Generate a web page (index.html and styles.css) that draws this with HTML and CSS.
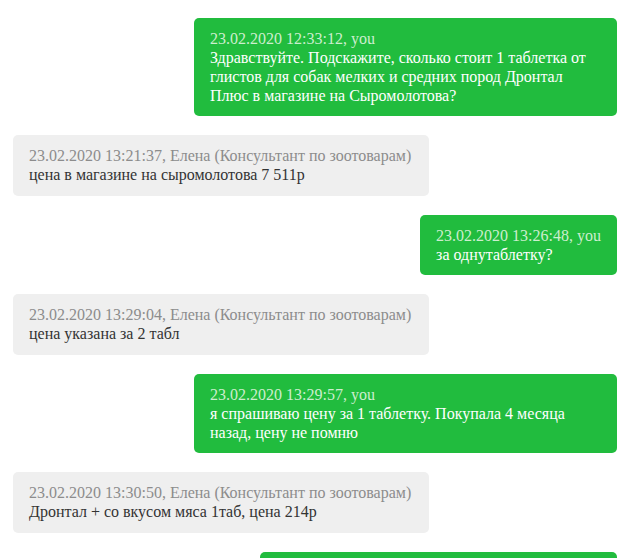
FILE: index.html
```html
<!DOCTYPE html>
<html lang="ru">
<head>
<meta charset="utf-8">
<link rel="stylesheet" href="styles.css">
</head>
<body>
<div class="chat">
  <div class="msg out">
    <div class="time">23.02.2020 12:33:12, you</div>
    <div class="text">Здравствуйте. Подскажите, сколько стоит 1 таблетка от глистов для собак мелких и средних пород Дронтал Плюс в магазине на Сыромолотова?</div>
  </div>
  <div class="msg in">
    <div class="time">23.02.2020 13:21:37, Елена (Консультант по зоотоварам)</div>
    <div class="text">цена в магазине на сыромолотова 7 511р</div>
  </div>
  <div class="msg out">
    <div class="time">23.02.2020 13:26:48, you</div>
    <div class="text">за однутаблетку?</div>
  </div>
  <div class="msg in">
    <div class="time">23.02.2020 13:29:04, Елена (Консультант по зоотоварам)</div>
    <div class="text">цена указана за 2 табл</div>
  </div>
  <div class="msg out">
    <div class="time">23.02.2020 13:29:57, you</div>
    <div class="text">я спрашиваю цену за 1 таблетку. Покупала 4 месяца назад, цену не помню</div>
  </div>
  <div class="msg in">
    <div class="time">23.02.2020 13:30:50, Елена (Консультант по зоотоварам)</div>
    <div class="text">Дронтал + со вкусом мяса 1таб, цена 214р</div>
  </div>
  <div class="msg out partial"></div>
</div>
</body>
</html>
```
FILE: styles.css
```css
html, body {
  margin: 0;
  padding: 0;
  background: #ffffff;
}
body {
  font-family: "Liberation Serif", "Times New Roman", "DejaVu Serif", serif;
  font-size: 16px;
  line-height: 19px;
  overflow: hidden;
  height: 558px;
}
.chat {
  display: flex;
  flex-direction: column;
  gap: 19px;
  padding: 18px 23px 0 13px;
}
.msg {
  max-width: 391px;
  padding: 11px 16px 11px 16px;
  border-radius: 5px;
}
.msg.out {
  align-self: flex-end;
  background: #21bc3e;
  color: #ffffff;
}
.msg.out .time {
  color: #cdeecf;
}
.msg.in {
  align-self: flex-start;
  background: #efefef;
  color: #333333;
  padding-bottom: 12px;
  padding-right: 18px;
}
.msg.in .time {
  color: #8c8c8c;
}
.msg.partial {
  width: 325px;
  height: 40px;
}
```
